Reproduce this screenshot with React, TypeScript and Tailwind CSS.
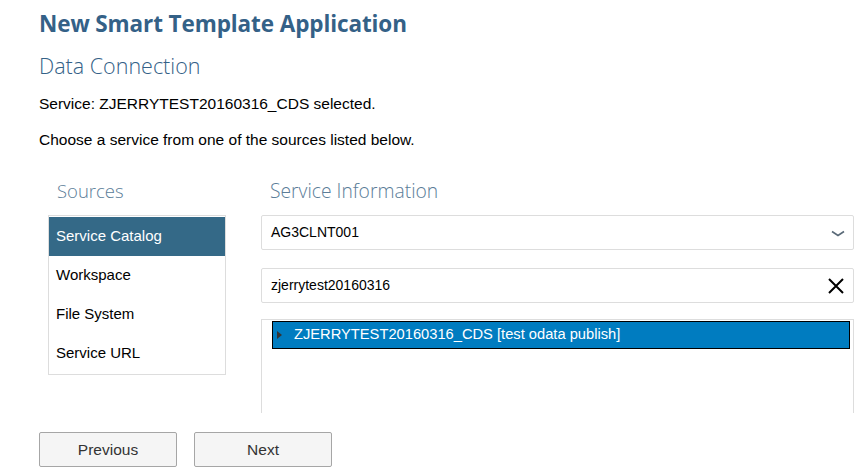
import React from "react";

export default function App() {
  const sources = ["Service Catalog", "Workspace", "File System", "Service URL"];
  return (
    <div className="w-[860px] h-[470px] bg-white overflow-hidden relative font-['Liberation_Sans',Arial,sans-serif] text-[14px] text-[#000]">
      <div className="pl-[39px] pt-[9px]">
        <h1 className="font-['Open_Sans',sans-serif] font-bold text-[22.5px] leading-[30px] text-[#346187] tracking-[-0.1px]">
          New Smart Template Application
        </h1>
        <h2 className="mt-[13px] font-['Open_Sans',sans-serif] font-light text-[21.5px] leading-[28px] text-[#346187]">
          Data Connection
        </h2>
        <p className="mt-[15px] leading-[18px] text-[15.5px]">Service: ZJERRYTEST20160316_CDS selected.</p>
        <p className="mt-[18px] leading-[18px] text-[15.5px]">Choose a service from one of the sources listed below.</p>
      </div>
      <div className="flex mt-[30px]">
        <div className="ml-[48px] w-[178px]">
          <div className="pl-[9px] font-['Open_Sans',sans-serif] font-light text-[18.5px] leading-[24px] text-[#5b7d98]">Sources</div>
          <div className="mt-[12px] border border-[#dddddd] pt-[1px] pb-[1px]">
            {sources.map((s, i) => (
              <div
                key={s}
                className={
                  "h-[39px] flex items-center pl-[7px] text-[15px] " +
                  (i === 0 ? "bg-[#346987] text-white" : "text-[#000]")
                }
              >
                {s}
              </div>
            ))}
          </div>
        </div>
        <div className="ml-[35px] w-[593px]">
          <div className="pl-[9px] font-['Open_Sans',sans-serif] font-light text-[19.3px] leading-[24px] text-[#5b7d98]">Service Information</div>
          <div className="mt-[12px] h-[35px] border border-[#dddddd] rounded-[2px] flex items-center justify-between pl-[9px] pr-[8px]">
            <span>AG3CLNT001</span>
            <svg width="14" height="8" viewBox="0 0 14 8" className="mt-[3px]">
              <path d="M1 1.5 L7 5.5 L13 1.5" fill="none" stroke="#5a6a78" strokeWidth="1.6" />
            </svg>
          </div>
          <div className="mt-[18px] h-[35px] border border-[#dddddd] rounded-[2px] flex items-center justify-between pl-[9px] pr-[8px]">
            <span>zjerrytest20160316</span>
            <svg width="18" height="18" viewBox="0 0 18 18">
              <path d="M2 2 L16 16 M16 2 L2 16" fill="none" stroke="#000" strokeWidth="2" />
            </svg>
          </div>
          <div className="mt-[16px] h-[94px] border-l border-t border-r border-[#dddddd] pl-[10px] pr-[3px] pt-[1px]">
            <div className="h-[28px] bg-[#007cc0] border border-black flex items-center pl-[4px] text-white">
              <svg width="6" height="10" viewBox="0 0 6 10" className="mr-[11px]">
                <path d="M0 1 L5 5 L0 9 Z" fill="#333" />
              </svg>
              <span className="text-[14.7px] mt-[-2px]">ZJERRYTEST20160316_CDS [test odata publish]</span>
            </div>
          </div>
        </div>
      </div>
      <div className="absolute left-[39px] top-[432px] flex gap-[17px]">
        <button className="w-[138px] h-[35px] border border-[#a6a6a6] rounded-[2px] bg-[#f5f5f5] text-[#333] text-[15.5px]">Previous</button>
        <button className="w-[138px] h-[35px] border border-[#a6a6a6] rounded-[2px] bg-[#f5f5f5] text-[#333] text-[15.5px]">Next</button>
      </div>
    </div>
  );
}
